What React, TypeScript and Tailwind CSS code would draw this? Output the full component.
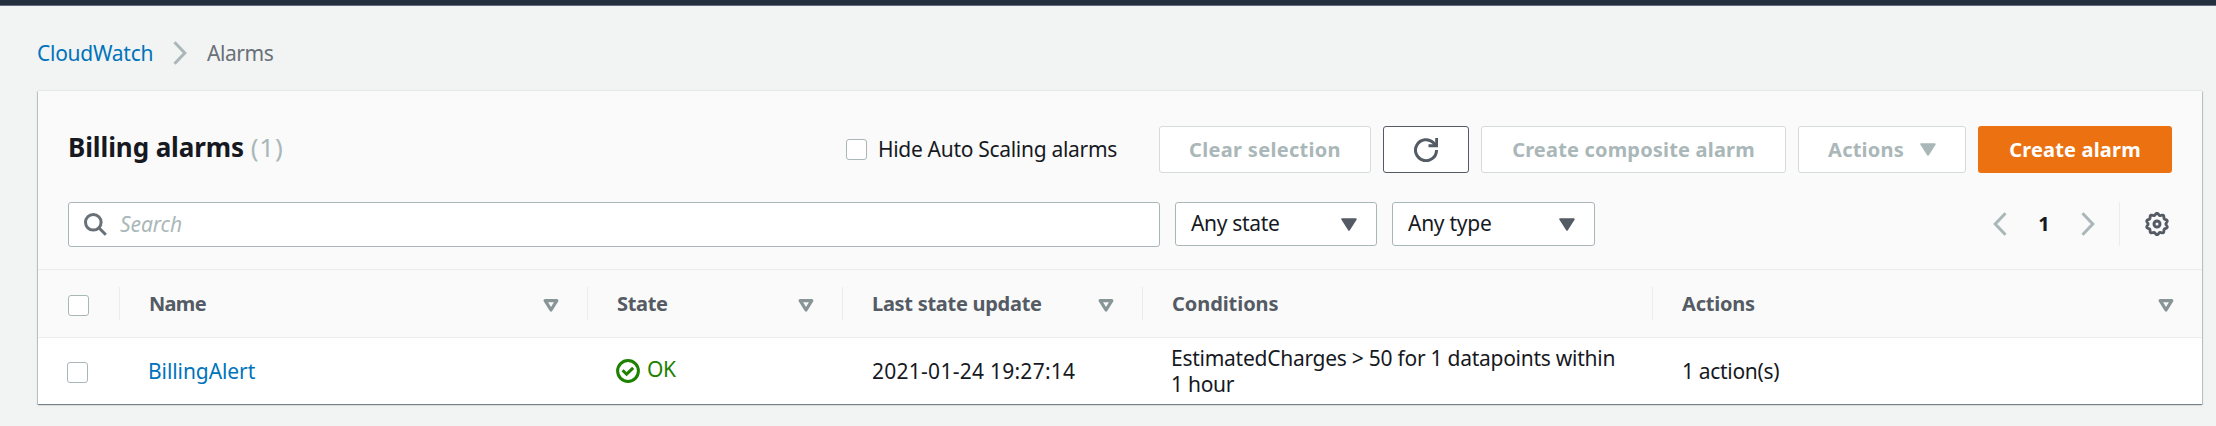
import React from "react";

function Checkbox({ className = "" }: { className?: string }) {
  return <span role="checkbox" aria-checked="false" className={`block h-[21px] w-[21px] shrink-0 rounded-[3px] border-[1.5px] border-[#aab7b8] bg-white ${className}`} />;
}

function Caret({ className = "" }: { className?: string }) {
  return (
    <svg viewBox="0 0 16 13" className={`h-[13px] w-4 shrink-0 ${className}`} fill="currentColor" stroke="currentColor" strokeWidth="2" strokeLinejoin="round">
      <path d="M1.3 1.2h13.4L8 11.8z" />
    </svg>
  );
}

function SortIcon() {
  return (
    <svg viewBox="0 0 16 13" className="h-[13px] w-4 shrink-0 text-[#879596]" fill="none" stroke="currentColor" strokeWidth="3.2" strokeLinejoin="round">
      <path d="M2.2 1.7h11.6L8 11z" />
    </svg>
  );
}

function Chevron({ left = false, className = "" }: { left?: boolean; className?: string }) {
  return (
    <svg viewBox="0 0 14 24" className={`h-6 w-[14px] shrink-0 text-[#aab7b8] ${className}`} fill="none" stroke="currentColor" strokeWidth="3">
      <path d={left ? "M12.5 1.2L2.2 12l10.3 10.8" : "M1.5 1.2L11.8 12 1.5 22.8"} />
    </svg>
  );
}

// Outline of a ten-toothed gear, sampled around the circle.
const gearPath =
  Array.from({ length: 120 }, (_, i) => {
    const angle = (i / 120) * Math.PI * 2;
    const radius = 9.8 + 0.95 * Math.cos(10 * angle);
    const x = 12 + radius * Math.sin(angle);
    const y = 12 - radius * Math.cos(angle);
    return `${i === 0 ? "M" : "L"}${x.toFixed(2)} ${y.toFixed(2)}`;
  }).join("") + "z";

function GearIcon() {
  return (
    <svg viewBox="0 0 24 24" className="mr-[3px] ml-[25px] h-6 w-6" fill="none" stroke="#545b64" strokeWidth="2.8" strokeLinejoin="round">
      <path d={gearPath} />
      <circle cx="12" cy="12" r="3" strokeWidth="3" />
    </svg>
  );
}

function Select({ label, className }: { label: string; className: string }) {
  return (
    <button className={`flex h-11 items-center justify-between rounded-[3px] border border-[#aab7b8] bg-white pr-[19px] pl-[15px] text-[21px] leading-[42px] ${className}`}>
      <span className="-mt-0.5">{label}</span>
      <Caret className="text-[#545b64]" />
    </button>
  );
}

function HeaderCell({ label, sortable = true, className = "" }: { label: string; sortable?: boolean; className?: string }) {
  return (
    <div className={`flex h-[33px] items-center justify-between border-l border-[#eaeded] pr-7 pl-[29px] ${className}`}>
      <span>{label}</span>
      {sortable && <span className="mt-1"><SortIcon /></span>}
    </div>
  );
}

const columns = "grid grid-cols-[81px_468px_255px_300px_510px_550px] items-center";
const disabled = "flex h-[47px] items-center justify-center rounded-[3px] border border-[#d5dbdb] bg-white text-[#aab7b8]";

export default function App() {
  return (
    <div className="h-[426px] w-[2216px] overflow-hidden bg-[#f2f3f3] font-['Noto_Sans',sans-serif] text-[21px] text-[#16191f]">
      <div className="h-[6px] border-b border-[#686a7c] bg-[#232f3e]" />
      <nav className="flex h-[85px] items-center pt-[8px] pl-[37px]">
        <a className="w-[136px] pt-[3px] tracking-[-0.26px] text-[#0073bb]">CloudWatch</a>
        <Chevron />
        <span className="ml-5 pt-[3px] tracking-[-0.45px] text-[#687078]">Alarms</span>
      </nav>

      <main className="ml-[38px] h-[313px] w-[2164px] bg-white shadow-[0_1px_1px_0_rgba(0,28,36,0.3),1px_1px_1px_0_rgba(0,28,36,0.15),-1px_1px_1px_0_rgba(0,28,36,0.15),0_0_1px_0_rgba(0,28,36,0.3)]">
        <div className="h-[179px] border-b border-[#eaeded] bg-[#fafafa] px-[30px] pt-[35px]">
          <div className="flex h-[47px] items-center">
            <h1 className="-mt-[5px] flex-1 text-[26px] font-bold">
              <span className="tracking-[-0.1px]">Billing alarms</span>{" "}
              <span className="font-normal tracking-[0.8px] text-[#aab7b8]">(1)</span>
            </h1>
            <label className="mr-[42px] flex items-center tracking-[-0.3px]">
              <Checkbox className="mr-[11px]" />
              <span className="pt-px">Hide Auto Scaling alarms</span>
            </label>
            <div className="flex gap-3 text-[20px] font-bold">
              <button className={`${disabled} w-[212px] tracking-[0.31px]`}>Clear selection</button>
              <button aria-label="Refresh" className="flex h-[47px] w-[86px] items-center justify-center rounded-[3px] border-[1.5px] border-[#545b64] bg-white text-[#545b64]">
                <svg viewBox="0 0 24 24" className="h-6 w-6" fill="none" stroke="currentColor" strokeWidth="3">
                  <path d="M22.5 12A10.5 10.5 0 1 1 19.5 4.8L21.5 7.5" />
                  <path d="M22.7 0v7.8H14.5" />
                </svg>
              </button>
              <button className={`${disabled} w-[305px] tracking-[0.18px]`}>Create composite alarm</button>
              <button className={`${disabled} w-[168px] gap-4 tracking-[0.2px]`}>Actions<Caret /></button>
              <button className="flex h-[47px] w-[194px] items-center justify-center rounded-[3px] bg-[#ec7211] tracking-[0.18px] text-white">Create alarm</button>
            </div>
          </div>
          <div className="mt-[29px] flex items-start">
            <div className="flex h-[45px] w-[1092px] items-center rounded-[3px] border border-[#aab7b8] bg-white pl-[15px]">
              <svg viewBox="0 0 23 23" className="mr-[13px] h-[23px] w-[23px]" fill="none" stroke="#687078" strokeWidth="3">
                <circle cx="9.3" cy="9.3" r="7.8" />
                <path d="M14.8 14.8l7 7" />
              </svg>
              <span className="tracking-[-0.1px] text-[#aab7b8] italic">Search</span>
            </div>
            <Select label="Any state" className="ml-[15px] w-[202px] tracking-[-0.33px]" />
            <Select label="Any type" className="ml-[15px] w-[203px] tracking-[-0.27px]" />
            <div className="ml-auto flex h-11 items-center">
              <Chevron left />
              <span className="w-[74px] text-center text-[20px] font-bold">1</span>
              <Chevron />
              <span className="ml-6 h-11 w-px bg-[#eaeded]" />
              <GearIcon />
            </div>
          </div>
        </div>

        <div className={`${columns} h-[68px] border-b border-[#eaeded] bg-[#fafafa] text-[20px] font-bold text-[#545b64]`}>
          <Checkbox className="mt-1 ml-[30px]" />
          <HeaderCell label="Name" className="tracking-[-0.7px]" />
          <HeaderCell label="State" className="tracking-[-0.35px]" />
          <HeaderCell label="Last state update" className="tracking-[-0.28px]" />
          <HeaderCell label="Conditions" sortable={false} className="tracking-[-0.07px]" />
          <HeaderCell label="Actions" className="tracking-[-0.2px]" />
        </div>

        <div className={`${columns} h-[66px] leading-[26px]`}>
          <Checkbox className="mt-[3px] ml-[29px]" />
          <a className="pl-[29px] tracking-[-0.08px] text-[#0073bb]">BillingAlert</a>
          <div className="flex items-center pl-[30px] text-[#1d8102]">
            <svg viewBox="0 0 24 24" className="mr-[7px] -ml-px h-6 w-6" fill="none" stroke="currentColor" strokeWidth="3">
              <circle cx="12" cy="12" r="10.4" />
              <path d="M6.6 11.2l4 4 6.6-6.4" />
            </svg>
            <span className="-mt-[5px] tracking-[-0.4px]">OK</span>
          </div>
          <span className="pl-[30px] tracking-[0.26px]">2021-01-24 19:27:14</span>
          <span className="pr-9 pl-[29px] tracking-[-0.26px]">EstimatedCharges &gt; 50 for 1 datapoints within 1 hour</span>
          <span className="pl-[30px] tracking-[-0.31px]">1 action(s)</span>
        </div>
      </main>
    </div>
  );
}
